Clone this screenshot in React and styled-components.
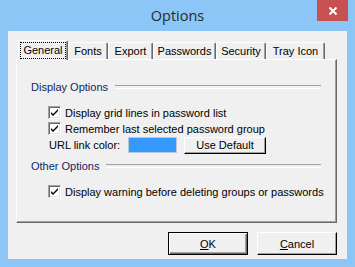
import React from 'react';
import styled, { createGlobalStyle } from 'styled-components';

const Global = createGlobalStyle`
  html, body {
    margin: 0;
    padding: 0;
    width: 355px;
    height: 267px;
    overflow: hidden;
  }
  * { box-sizing: border-box; }
`;

const Window = styled.div`
  width: 355px;
  height: 267px;
  display: flex;
  flex-direction: column;
  background: #8cc6f7;
  font-family: "Liberation Sans", Arial, sans-serif;
  font-size: 11px;
  color: #000;
`;

const TitleBar = styled.div`
  height: 31px;
  display: grid;
  grid-template-columns: 1fr auto 1fr;
  align-items: start;
`;

const Title = styled.div`
  grid-column: 2;
  margin-top: 6px;
  font-family: "Open Sans", "Noto Sans", sans-serif;
  font-size: 14.5px;
  color: #2a2a2a;
`;

const CloseButton = styled.div`
  grid-column: 3;
  justify-self: end;
  width: 31px;
  height: 21px;
  margin-right: 7px;
  background: #c75050;
  display: flex;
  align-items: center;
  justify-content: center;
`;

const Client = styled.div`
  flex: 1;
  margin: 0 8px 8px 8px;
  background: #f0f0f0;
  display: flex;
  flex-direction: column;
  padding: 9px 10px 0 8px;
`;

const TabStrip = styled.div`
  display: flex;
  align-items: flex-end;
  height: 19px;
  padding-left: 2px;
  position: relative;
  z-index: 1;
`;

const Tab = styled.div`
  width: ${p => p.$w}px;
  height: ${p => (p.$active ? '20px' : '17px')};
  margin-bottom: ${p => (p.$active ? '-1px' : '0')};
  display: flex;
  align-items: center;
  justify-content: center;
  background: #f0f0f0;
  border-top: 1px solid #fff;
  border-left: 1px solid #fff;
  border-right: 1px solid #696969;
  box-shadow: inset -1px 0 0 #a0a0a0;
  border-top-left-radius: 2px;
  border-top-right-radius: 2px;
  white-space: nowrap;
`;

const TabLabel = styled.span`
  padding: 1px 2px 2px;
  border: 1px dotted ${p => (p.$focus ? '#000' : 'transparent')};
  line-height: 12px;
`;

const Panel = styled.div`
  height: 164px;
  background: #f0f0f0;
  border-top: 1px solid #fff;
  border-left: 1px solid #fff;
  border-right: 1px solid #696969;
  border-bottom: 1px solid #696969;
  box-shadow: inset -1px -1px 0 #a0a0a0;
  padding: 20px 15px 0 14px;
  display: flex;
  flex-direction: column;
`;

const GroupHeader = styled.div`
  height: 13px;
  display: flex;
  align-items: center;
  gap: 7px;
  color: #10275f;
  &::after {
    content: '';
    flex: 1;
    height: 2px;
    border-top: 1px solid #a0a0a0;
    border-bottom: 1px solid #fff;
  }
`;

const GroupBody = styled.div`
  padding: 13px 0 0 17px;
  display: flex;
  flex-direction: column;
  gap: 3px;
  margin-bottom: ${p => p.$after || '0'};
`;

const Row = styled.div`
  height: ${p => p.$h || '13px'};
  display: flex;
  align-items: center;
  gap: ${p => p.$gap || '4px'};
  margin-top: ${p => p.$mt || '0'};
  white-space: nowrap;
`;

const Box = styled.span`
  width: 13px;
  height: 13px;
  flex: none;
  background: #fff;
  border-top: 1px solid #a0a0a0;
  border-left: 1px solid #a0a0a0;
  border-right: 1px solid #fff;
  border-bottom: 1px solid #fff;
  box-shadow: inset 1px 1px 0 #696969, inset -1px -1px 0 #e3e3e3;
  display: flex;
  align-items: center;
  justify-content: center;
`;

const Label = styled.span`
  width: ${p => (p.$w ? `${p.$w}px` : 'auto')};
  margin-left: ${p => p.$ml || '0'};
  flex: none;
`;

const Swatch = styled.span`
  width: 49px;
  height: 16px;
  flex: none;
  background: #3399ff;
  border: 1px solid #b9c9dc;
`;

const Button = styled.div`
  width: ${p => p.$w || '80px'};
  height: ${p => p.$h || '23px'};
  margin-left: ${p => p.$ml || '0'};
  display: flex;
  align-items: center;
  justify-content: center;
  background: #f0f0f0;
  border: 1px solid #000;
  box-shadow: inset 1px 1px 0 #fff, inset -1px -1px 0 #696969, inset -2px -2px 0 #a0a0a0;
  ${p => !p.$default && `
    border-top-color: #fff;
    border-left-color: #fff;
    box-shadow: inset -1px -1px 0 #a0a0a0;
  `}
`;

const ButtonRow = styled.div`
  flex: 1;
  display: flex;
  justify-content: flex-end;
  align-items: flex-start;
  gap: 9px;
  padding-top: 9px;
`;

const Check = () => (
  <svg width="9" height="9" viewBox="0 0 9 9">
    <path d="M1 4 L3 6 L8 1 L8 3 L3 8 L1 6 Z" fill="#000" />
  </svg>
);

const CheckRow = ({ children }) => (
  <Row>
    <Box><Check /></Box>
    <Label>{children}</Label>
  </Row>
);

const tabs = [
  ['General', 50],
  ['Fonts', 40],
  ['Export', 45],
  ['Passwords', 63],
  ['Security', 50],
  ['Tray Icon', 59],
];

export default function App() {
  return (
    <>
      <Global />
      <Window>
        <TitleBar>
          <Title>Options</Title>
          <CloseButton>
            <svg width="10" height="10" viewBox="0 0 10 10">
              <path d="M1.5 1.5 L8.5 8.5 M8.5 1.5 L1.5 8.5" stroke="#fff" strokeWidth="2" />
            </svg>
          </CloseButton>
        </TitleBar>
        <Client>
          <TabStrip>
            {tabs.map(([t, w], i) => (
              <Tab key={t} $w={w} $active={i === 0}>
                <TabLabel $focus={i === 0}>{t}</TabLabel>
              </Tab>
            ))}
          </TabStrip>
          <Panel>
            <GroupHeader>Display Options</GroupHeader>
            <GroupBody $after="6px">
              <CheckRow>Display grid lines in password list</CheckRow>
              <CheckRow>Remember last selected password group</CheckRow>
              <Row $h="16px" $gap="0" $mt="-1px">
                <Label $w={79} $ml="1px">URL link color:</Label>
                <Swatch />
                <Button $w="82px" $h="17px" $ml="7px">Use Default</Button>
              </Row>
            </GroupBody>
            <GroupHeader>Other Options</GroupHeader>
            <GroupBody>
              <CheckRow>Display warning before deleting groups or passwords</CheckRow>
            </GroupBody>
          </Panel>
          <ButtonRow>
            <Button $default><u>O</u>K</Button>
            <Button><u>C</u>ancel</Button>
          </ButtonRow>
        </Client>
      </Window>
    </>
  );
}
